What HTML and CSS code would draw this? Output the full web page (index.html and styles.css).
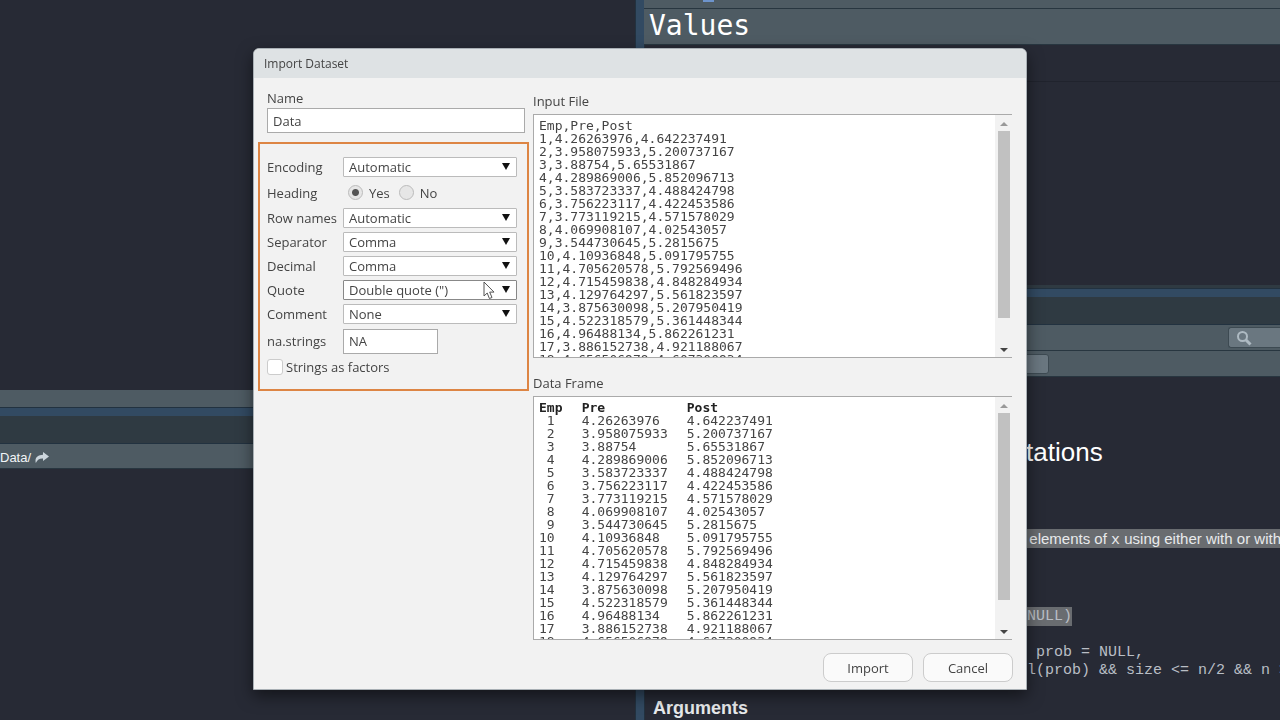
FILE: index.html
```html
<!doctype html>
<html lang="en">
<head>
	<meta charset="UTF-8">
	<meta name="viewport" content="width=device-width,initial-scale=1.0">
	<title>Import Dataset</title>
	<link rel="stylesheet" href="styles.css">
</head>
<body>
	<div class="ide">
		<div class="column left">
			<section class="pane">
				<div class="editor"></div>
				<div class="bar status"></div>
			</section>
			<div class="splitter"></div>
			<section class="pane">
				<div class="tabs"></div>
				<div class="bar path">
					<span>Data/</span>
					<svg class="share" viewBox="0 0 14 11" width="14" height="11"><path d="M8 0l6 4.500-6 4.500V6.400C4.500 6.200 2.500 7.500.8 11-.5 6 2.500 2.800 8 2.700z" fill="#ccd6dd"/></svg>
				</div>
			</section>
		</div>

		<div class="splitter"></div>

		<div class="column right">
			<section class="pane">
				<div class="bar scope"><i></i></div>
				<div class="bar values">Values</div>
				<div class="env"></div>
				<div class="env_foot"></div>
			</section>
			<div class="splitter"></div>
			<section class="pane">
				<div class="tabs"></div>
				<div class="bar tool">
					<label class="search">
						<svg viewBox="0 0 16 16" width="16" height="16" fill="none" stroke="#aebac2"><circle cx="6.500" cy="6.500" r="4.500" stroke-width="2"/><path d="M10 10l4.500 4.500" stroke-width="3"/></svg>
						<input type="text" aria-label="Search help">
					</label>
				</div>
				<div class="bar tool find"><input type="text" aria-label="Find in topic"></div>
				<article class="help">
					<h1>Random Samples and Permutations</h1>
					<p><mark><code>sample</code> takes a sample of the specified size from the elements of <code>x</code> using either with or without replacement.</mark></p>
					<pre><mark>sample(x, size, replace = FALSE, prob = NULL)</mark>

sample.int(n, size = n, replace = FALSE, prob = NULL,
           useHash = (!replace &amp;&amp; is.null(prob) &amp;&amp; size &lt;= n/2 &amp;&amp; n &gt; 1e7))</pre>
					<h2>Arguments</h2>
				</article>
			</section>
		</div>
	</div>

	<div class="overlay">
		<form class="dialog">
			<header class="title">Import Dataset</header>
			<div class="content">
				<div class="options">
					<div class="name">
						<label for="name">Name</label>
						<input type="text" id="name" value="Data">
					</div>
					<div class="settings">
						<div class="row">
							<label for="encoding">Encoding</label>
							<span class="drop"><select id="encoding"><option>Automatic</option></select></span>
						</div>
						<div class="row heading">
							<span>Heading</span>
							<span class="radios">
								<label><input type="radio" name="heading" checked>Yes</label>
								<label><input type="radio" name="heading">No</label>
							</span>
						</div>
						<div class="row">
							<label for="rownames">Row names</label>
							<span class="drop"><select id="rownames"><option>Automatic</option></select></span>
						</div>
						<div class="row">
							<label for="separator">Separator</label>
							<span class="drop"><select id="separator"><option>Comma</option></select></span>
						</div>
						<div class="row">
							<label for="decimal">Decimal</label>
							<span class="drop"><select id="decimal"><option>Comma</option></select></span>
						</div>
						<div class="row">
							<label for="quote">Quote</label>
							<span class="drop active">
								<select id="quote"><option>Double quote (")</option></select>
								<svg class="pointer" viewBox="0 0 12 19" width="12" height="19"><path d="M1 1v14l3.200-3 2.200 5.500 2.600-1-2.300-5.400H11z" fill="#fff" stroke="#555"/></svg>
							</span>
						</div>
						<div class="row">
							<label for="comment">Comment</label>
							<span class="drop"><select id="comment"><option>None</option></select></span>
						</div>
						<div class="row na">
							<label for="na">na.strings</label>
							<input type="text" id="na" value="NA">
						</div>
						<label class="factors"><input type="checkbox">Strings as factors</label>
					</div>
				</div>

				<div class="preview">
					<h3>Input File</h3>
					<div class="view">
						<pre>Emp,Pre,Post
1,4.26263976,4.642237491
2,3.958075933,5.200737167
3,3.88754,5.65531867
4,4.289869006,5.852096713
5,3.583723337,4.488424798
6,3.756223117,4.422453586
7,3.773119215,4.571578029
8,4.069908107,4.02543057
9,3.544730645,5.2815675
10,4.10936848,5.091795755
11,4.705620578,5.792569496
12,4.715459838,4.848284934
13,4.129764297,5.561823597
14,3.875630098,5.207950419
15,4.522318579,5.361448344
16,4.96488134,5.862261231
17,3.886152738,4.921188067
18,4.656506979,4.607300934</pre>
						<div class="scroll"><i class="up"></i><div class="track"><b></b></div><i class="down"></i></div>
					</div>
					<h3>Data Frame</h3>
					<div class="view">
						<div class="frame">
							<table>
								<thead><tr><th>Emp</th><th>Pre</th><th>Post</th></tr></thead>
								<tbody>
									<tr><td>1</td><td>4.26263976</td><td>4.642237491</td></tr>
									<tr><td>2</td><td>3.958075933</td><td>5.200737167</td></tr>
									<tr><td>3</td><td>3.88754</td><td>5.65531867</td></tr>
									<tr><td>4</td><td>4.289869006</td><td>5.852096713</td></tr>
									<tr><td>5</td><td>3.583723337</td><td>4.488424798</td></tr>
									<tr><td>6</td><td>3.756223117</td><td>4.422453586</td></tr>
									<tr><td>7</td><td>3.773119215</td><td>4.571578029</td></tr>
									<tr><td>8</td><td>4.069908107</td><td>4.02543057</td></tr>
									<tr><td>9</td><td>3.544730645</td><td>5.2815675</td></tr>
									<tr><td>10</td><td>4.10936848</td><td>5.091795755</td></tr>
									<tr><td>11</td><td>4.705620578</td><td>5.792569496</td></tr>
									<tr><td>12</td><td>4.715459838</td><td>4.848284934</td></tr>
									<tr><td>13</td><td>4.129764297</td><td>5.561823597</td></tr>
									<tr><td>14</td><td>3.875630098</td><td>5.207950419</td></tr>
									<tr><td>15</td><td>4.522318579</td><td>5.361448344</td></tr>
									<tr><td>16</td><td>4.96488134</td><td>5.862261231</td></tr>
									<tr><td>17</td><td>3.886152738</td><td>4.921188067</td></tr>
									<tr><td>18</td><td>4.656506979</td><td>4.607300934</td></tr>
								</tbody>
							</table>
						</div>
						<div class="scroll"><i class="up"></i><div class="track"><b></b></div><i class="down"></i></div>
					</div>
					<footer class="buttons">
						<button type="button">Import</button>
						<button type="button">Cancel</button>
					</footer>
				</div>
			</div>
		</form>
	</div>
</body>
</html>
```
FILE: styles.css
```css
*{
	box-sizing: border-box;
	padding: 0;
	margin: 0;
}
html,body{
	height: 100%;
	overflow: hidden;
}
body{
	background: #272a35;
	font-family: "Open Sans", "Noto Sans", sans-serif;
	font-size: 13px;
	color: #444;
}
input,select,button{
	font: inherit;
	color: inherit;
}

/* workbench */
.ide{
	height: 100%;
	display: grid;
	grid-template-columns: minmax(0,1fr) 8px minmax(0,1fr);
}
.column{
	display: grid;
	min-height: 0;
}
.left{
	grid-template-rows: minmax(0,51fr) 8px minmax(0,38fr);
}
.right{
	grid-template-rows: minmax(0,13fr) 8px minmax(0,19fr);
}
.splitter{
	background: #324a62;
	outline: 1px solid #223240;
}
.pane{
	display: flex;
	flex-direction: column;
	min-height: 0;
	overflow: hidden;
}
.editor,.env{
	flex: 1;
}
.bar{
	flex: none;
	background: #4e5b63;
	border-bottom: 1px solid #283640;
}
.status{
	height: 18px;
}
.tabs{
	flex: none;
	height: 28px;
	background: #2f3a42;
	border-bottom: 1px solid #223240;
}
.path{
	height: 25px;
	display: flex;
	align-items: center;
	gap: 4px;
	padding-top: 2px;
	font-family: "Liberation Sans", sans-serif;
	font-size: 13px;
	color: #f2f5f7;
}
.scope{
	height: 9px;
	padding-left: 59px;
}
.scope i{
	display: block;
	width: 11px;
	height: 2px;
	background: #6d94cc;
}
.values{
	height: 36px;
	padding-left: 5px;
	font: 28px/34px "DejaVu Sans Mono", monospace;
	color: #fff;
}
.env{
	background: linear-gradient(#20232d,#20232d) 0 36px/100% 1px no-repeat;
}
.env_foot{
	height: 4px;
	background: #2f3a42;
}
.tool{
	height: 26px;
	display: flex;
	align-items: center;
	justify-content: flex-end;
}
.search{
	width: 52px;
	height: 21px;
	display: flex;
	align-items: center;
	padding-left: 7px;
	background: #6a7780;
	border: 1px solid #3d4a52;
	border-right: 0;
	border-radius: 3px 0 0 3px;
}
.search input{
	flex: 1;
	min-width: 0;
	border: 0;
	background: none;
}
.find{
	justify-content: flex-start;
	padding-left: 205px;
}
.find input{
	width: 200px;
	height: 20px;
	background: #6a7780;
	border: 1px solid #3d4a52;
	border-radius: 3px;
}
.help{
	padding: 60px 0 0 9px;
	font: 15px/18px "Liberation Sans", sans-serif;
	color: #e8eaec;
	white-space: nowrap;
}
.help h1{
	padding-left: 32px;
	font-size: 26px;
	line-height: 30px;
	font-weight: normal;
	color: #fff;
}
.help p{
	padding: 63px 0 0 18px;
}
.help mark{
	padding: 1px 0;
	background: #696c70;
	color: inherit;
}
.help code,.help pre{
	font-family: "Liberation Mono", monospace;
	font-size: 15px;
}
.help pre{
	padding: 58px 0 17px 14px;
	color: #b9bec5;
}
.help h2{
	font-size: 18px;
	line-height: 22px;
}

/* import dialog */
.overlay{
	position: fixed;
	inset: 0;
	display: flex;
	align-items: flex-start;
	justify-content: center;
	padding-top: 48px;
}
.dialog{
	width: 774px;
	background: #f2f2f2;
	border: 1px solid #a9b0b5;
	border-radius: 6px 6px 0 0;
	box-shadow: 0 6px 16px rgba(0,0,0,.5);
}
.title{
	height: 29px;
	padding-left: 10px;
	font-size: 12px;
	line-height: 30px;
	background: #dee2e4;
	border-radius: 5px 5px 0 0;
}
.content{
	display: flex;
	gap: 4px;
	padding: 11px 13px 7px 4px;
}
.options{
	width: 271px;
}
.name{
	display: flex;
	flex-direction: column;
	padding: 0 4px 0 9px;
	line-height: 19px;
}
.dialog input[type=text]{
	height: 25px;
	padding-left: 5px;
	background: #fff;
	border: 1px solid #aaa;
}
.settings{
	margin-top: 9px;
	padding: 11px 10px 11px 7px;
	border: 2px solid #dd8544;
}
.row{
	height: 24px;
	display: grid;
	grid-template-columns: 76px 1fr;
	align-items: center;
	white-space: nowrap;
}
.row.heading{
	height: 27px;
}
.drop{
	position: relative;
}
.drop select{
	appearance: none;
	display: block;
	width: 100%;
	height: 20px;
	padding-left: 5px;
	line-height: 18px;
	background: #fff;
	border: 1px solid #bbb;
	border-radius: 1px;
}
.drop::after{
	content: "";
	position: absolute;
	right: 7px;
	top: 6px;
	border: solid transparent;
	border-width: 7px 4px 0;
	border-top-color: #111;
}
.active select{
	border-color: #888;
}
.pointer{
	position: absolute;
	right: 22px;
	top: 1px;
}
.radios{
	display: flex;
	gap: 9px;
	padding-left: 5px;
}
.radios label{
	display: flex;
	align-items: center;
	gap: 6px;
}
.radios input{
	appearance: none;
	width: 15px;
	height: 15px;
	border: 1px solid #bbb;
	border-radius: 50%;
	background: #e6e6e6;
}
.radios input:checked{
	background: radial-gradient(circle,#555 0 3px,#e6e6e6 4px);
}
.row.na{
	height: 30px;
}
.na input{
	width: 95px;
}
.factors{
	height: 22px;
	display: flex;
	align-items: center;
	gap: 3px;
}
.factors input{
	appearance: none;
	width: 16px;
	height: 16px;
	background: #fff;
	border: 1px solid #ccc;
	border-radius: 3px;
}
.preview{
	flex: 1;
	min-width: 0;
}
.preview h3{
	height: 25px;
	line-height: 25px;
	font-size: 13px;
	font-weight: normal;
}
.view{
	height: 244px;
	margin: 0 1px 13px 0;
	display: flex;
	background: #fff;
	border: solid #aaa;
	border-width: 1px 0 1px 1px;
	font: 13px/13px "DejaVu Sans Mono", monospace;
	overflow: hidden;
}
.view pre,.frame{
	flex: 1;
	padding: 4px 5px;
	font: inherit;
}
.view table{
	border-collapse: collapse;
}
.view th{
	text-align: left;
	padding-right: 19px;
	color: #222;
}
.view td{
	padding-right: 19px;
}
.view td:first-child{
	text-align: right;
	padding-right: 27px;
}
.scroll{
	width: 17px;
	display: flex;
	flex-direction: column;
	align-items: center;
	background: #f2f2f2;
}
.scroll i{
	border: 4px solid transparent;
}
.scroll .up{
	margin: 3px 0 5px;
	border-top: 0;
	border-bottom-color: #999;
	padding-top: 4px;
}
.scroll .down{
	margin: 4px 0 5px;
	border-bottom: 0;
	border-top-color: #444;
}
.track{
	flex: 1;
}
.track b{
	display: block;
	width: 12px;
	height: 88%;
	background: #c1c1c1;
}
.buttons{
	display: flex;
	justify-content: flex-end;
	gap: 10px;
}
.buttons button{
	width: 90px;
	height: 29px;
	background: #fafafa;
	border: 1px solid #ccc;
	border-radius: 8px;
}
```
